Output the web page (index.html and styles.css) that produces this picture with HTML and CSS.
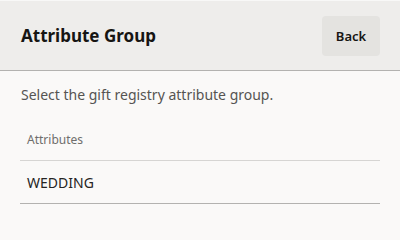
FILE: index.html
```html
<!DOCTYPE html>
<html>
<head>
<meta charset="utf-8">
<link rel="stylesheet" href="styles.css">
</head>
<body>
<div class="page">
  <header class="header">
    <h1 class="title">Attribute Group</h1>
    <button class="back">Back</button>
  </header>
  <main class="content">
    <p class="intro">Select the gift registry attribute group.</p>
    <div class="list">
      <div class="list-head">Attributes</div>
      <div class="list-row">WEDDING</div>
    </div>
  </main>
</div>
</body>
</html>
```
FILE: styles.css
```css
html, body {
  margin: 0;
  padding: 0;
  background: #faf9f8;
  font-family: "Noto Sans", "Open Sans", sans-serif;
}
.page {
  width: 400px;
  height: 224px;
  overflow: hidden;
}
.header {
  background: #eeedeb;
  border-top: 1px solid #f8f8f7;
  border-bottom: 1px solid #b3b2b0;
  box-sizing: border-box;
  height: 71px;
  display: flex;
  align-items: center;
  justify-content: space-between;
  padding: 0 20px 0 21px;
}
.title {
  margin: 0;
  font-size: 17px;
  font-weight: 700;
  color: #161513;
}
.back {
  width: 58px;
  height: 40px;
  border: none;
  border-radius: 4px;
  background: #e4e3e0;
  font-family: inherit;
  font-size: 13px;
  font-weight: 600;
  color: #161513;
  padding: 0;
}
.content {
  padding: 0 20px;
}
.intro {
  margin: 14px 0 0 1px;
  font-size: 14px;
  color: #555452;
  line-height: 20px;
}
.list {
  margin-top: 27px;
}
.list-head {
  padding: 0 7px 12px;
  font-size: 12px;
  color: #6f6e6c;
  line-height: 16px;
  border-bottom: 1px solid #d6d5d3;
}
.list-row {
  padding: 12px 7px 0;
  box-sizing: border-box;
  height: 43px;
  font-size: 14px;
  color: #252423;
  line-height: 20px;
  border-bottom: 1px solid #b3b2b0;
}
```
